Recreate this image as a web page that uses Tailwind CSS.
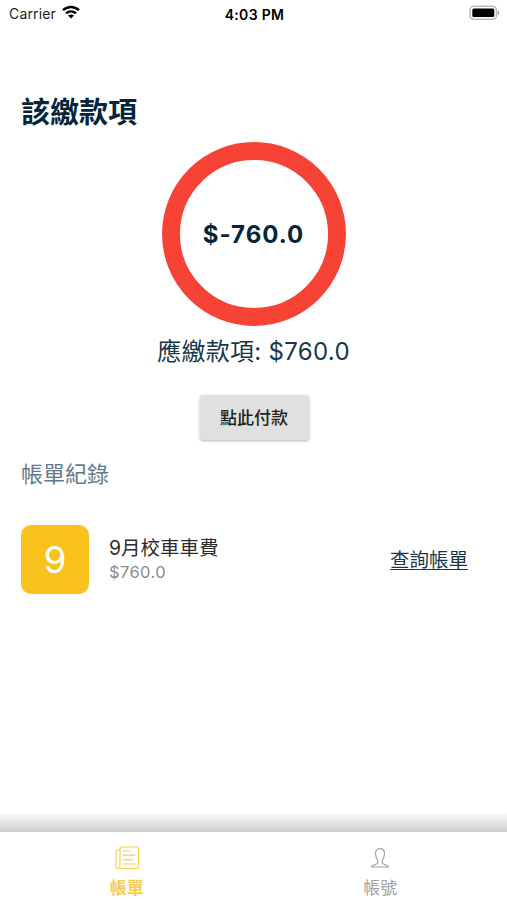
<!DOCTYPE html>
<html lang="zh-Hant">
<head>
  <meta charset="UTF-8">
  <meta name="viewport" content="width=device-width, initial-scale=1.0">
  <title>該繳款項</title>
  <script src="https://cdn.jsdelivr.net/npm/@tailwindcss/browser@4"></script>
</head>
<body class="bg-white font-['Inter','Noto_Sans_CJK_TC',sans-serif]">
  <div class="flex flex-col h-[900px] overflow-hidden text-[#04253a]">

    <!-- Status bar -->
    <header class="grid grid-cols-3 items-center h-7 pl-[9px] pr-[7px] text-black">
      <div class="flex items-center gap-1.5 -mt-0.5">
        <span class="text-[14px] tracking-[0.15px] text-[#222]">Carrier</span>
        <svg class="w-[18px] h-[14px] -mt-0.5" viewBox="0 0 18 14" fill="none" stroke="#000" stroke-width="2.5">
          <path d="M1 5.2C5.6.9 12.4.9 17 5.2" />
          <path d="M4 8.4C6.9 5.8 11.1 5.8 14 8.4" />
          <path d="M9 13.6 6 10.6C7.8 9.2 10.2 9.2 12 10.6Z" fill="#000" stroke="none" />
        </svg>
      </div>
      <span class="text-center text-[14px] font-semibold tracking-[0.3px]">4:03 PM</span>
      <svg class="justify-self-end w-[31px] h-4 -mt-0.5" viewBox="0 0 31 16">
        <rect x="1" y="1.300" width="26.500" height="13" rx="4" fill="#fff" stroke="#bbb" stroke-width="1.600" />
        <rect x="3.300" y="3.600" width="22" height="8.500" rx="1.500" fill="#000" />
        <path d="M28.800 5.600c2 .8 2 3.600 0 4.400Z" fill="#999" />
      </svg>
    </header>

    <main class="flex flex-col grow px-[21px] pt-[65px]">
      <h1 class="h-10 leading-10 text-[29px] font-bold">該繳款項</h1>

      <!-- Balance -->
      <section class="flex flex-col items-center mt-[9px]">
        <div class="flex items-center justify-center size-[184px] rounded-full border-[18.5px] border-[#f74336]">
          <span class="pt-0.5 text-[24px] font-bold tracking-[1px]">$-760.0</span>
        </div>
        <p class="h-9 leading-9 mt-2 text-[24px] tracking-[0.3px] text-[#19374a]">應繳款項: $760.0</p>
        <button class="mt-[25px] ml-px w-[109px] h-[45px] rounded-[3px] bg-[#e0e0e0] pt-0.5 text-[17px] font-medium text-[#222] shadow-[0_1px_3px_rgba(0,0,0,0.3)]">點此付款</button>
      </section>

      <!-- Bill history -->
      <h2 class="h-8 leading-8 mt-[18px] text-[22px] text-[#637987]">帳單紀錄</h2>
      <div class="flex items-center mt-[35px] h-[69px]">
        <div class="flex items-center justify-center w-[68px] h-[69px] rounded-[10px] bg-[#f9c21a] text-white text-[37px]">9</div>
        <div class="ml-5 grow">
          <div class="text-[19.5px] leading-6 text-[#2c2c2c]">9月校車車費</div>
          <div class="text-[16.5px] leading-6 tracking-[0.4px] text-[#8a8a8a]">$760.0</div>
        </div>
        <a href="#" class="mr-[18px] pt-0.5 text-[19.5px] text-[#19374a] underline underline-offset-2">查詢帳單</a>
      </div>
    </main>

    <div class="h-5 bg-linear-to-b from-white to-[#cfcfcf]"></div>

    <!-- Tab bar -->
    <nav class="grid grid-cols-2 h-[68px] bg-white text-[17px]">
      <a href="#" class="flex flex-col items-center pt-3.5 text-[#f9cc52] font-bold">
        <svg class="w-6 h-6" viewBox="0 0 24 24" fill="none" stroke="currentColor" stroke-width="1.2">
          <path d="M5 1h17a1.500 1.500 0 0 1 1.500 1.500v18.500a1.500 1.500 0 0 1-1.500 1.500H3.500A2.500 2.500 0 0 1 1 20V5.500A1.500 1.500 0 0 1 2.500 4H5" />
          <path d="M5 1v18.500a1.500 1.500 0 0 1-1.500 1.500" />
          <path d="M8 5h7.500M8 9.200h12.500M8 13.800h9.500M8 18h12.500" />
        </svg>
        <span class="leading-6 mt-1.5">帳單</span>
      </a>
      <a href="#" class="flex flex-col items-center pt-3.5 text-[#a0a0a0]">
        <svg class="w-6 h-6" viewBox="0 0 24 24" fill="none" stroke="currentColor" stroke-width="1.200" stroke-linejoin="round">
          <path d="M9.800 14.500C8.300 12.500 7.500 9.800 7.500 7.500 7.500 4.500 9.200 2.600 12 2.600s4.500 1.900 4.500 4.900c0 2.300-.8 5-2.300 7v2.700c0 1 5.800 1.300 6.300 3.800H3.500c.5-2.500 6.300-2.800 6.300-3.800Z" />
        </svg>
        <span class="leading-6 mt-1.5">帳號</span>
      </a>
    </nav>
  </div>
</body>
</html>
